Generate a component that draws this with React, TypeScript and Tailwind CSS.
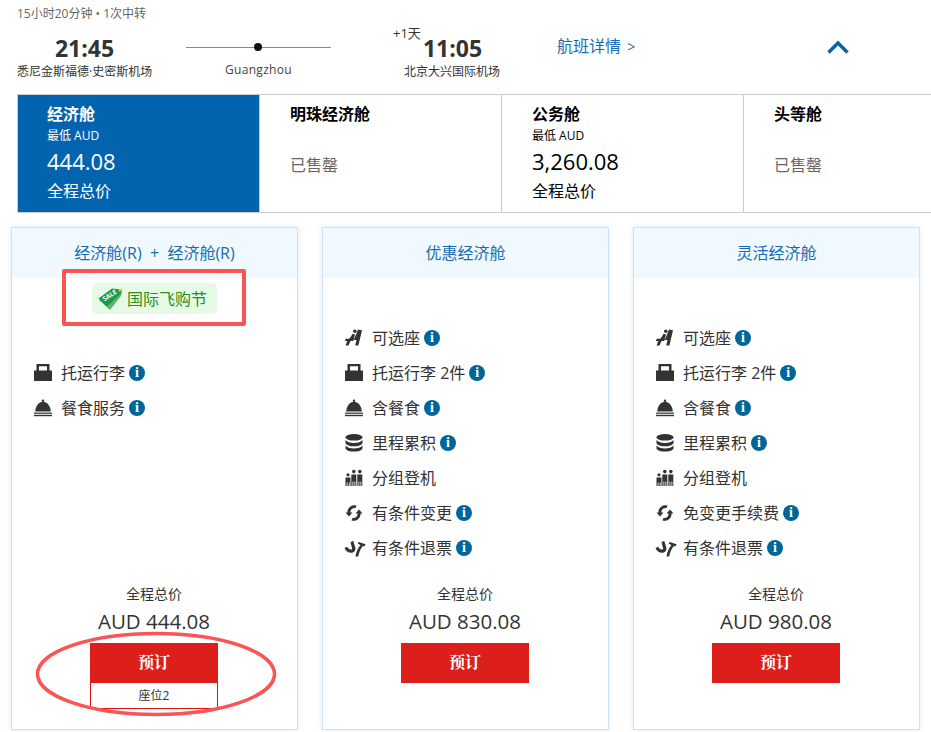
import type { ReactNode } from "react";

const FONT = "font-['Open_Sans','Noto_Sans_CJK_SC',sans-serif]";

type IconName = "seat" | "bag" | "meal" | "miles" | "group" | "change" | "refund";

function FeatureIcon({ name }: { name: IconName }) {
  const cls = "h-[20px] w-[20px] shrink-0 fill-[#333] text-[#333]";
  if (name === "seat") {
    return (
      <svg viewBox="0 0 20 20" className={cls}>
        <path d="M14 1.500l4 .8-3.600 15.200h-3.200l1.300-5.400H9.800z" />
        <circle cx="10.800" cy="3.300" r="1.800" />
        <path d="M8.500 5.800l2.500.6-1.700 6.600H6.500l-2 4.500H1.500l1.800-4.500H.8l1-2.200h3.400L7 8.500z" />
      </svg>
    );
  }
  if (name === "bag") {
    return (
      <svg viewBox="0 0 20 20" className={cls}>
        <path d="M3.500 1h13v6.500H19V18H1V7.500h2.500zM6 3.200v4.300h8V3.200z" fillRule="evenodd" />
      </svg>
    );
  }
  if (name === "meal") {
    return (
      <svg viewBox="0 0 20 20" className={cls}>
        <circle cx="10" cy="2.800" r="1.200" />
        <path d="M2.200 13.400C2.500 8 6 3.800 10 3.800s7.500 4.200 7.800 9.600z" />
        <rect x="1" y="14.600" width="18" height="1.200" />
        <rect x="1" y="16.800" width="18" height="1.400" />
      </svg>
    );
  }
  if (name === "miles") {
    return (
      <svg viewBox="0 0 20 20" className={cls}>
        <ellipse cx="10" cy="4.300" rx="8.500" ry="3.300" />
        <path d="M1.500 7c1.500 2 4.800 2.900 8.500 2.900s7-.9 8.500-2.900v3.200c-1 2.100-4.800 3.100-8.500 3.100s-7.500-1-8.500-3.100z" />
        <path d="M1.500 12.500c1.500 2 4.800 2.900 8.500 2.900s7-.9 8.500-2.900v2.900c-1 2.200-4.800 3.200-8.500 3.200s-7.500-1-8.500-3.200z" />
      </svg>
    );
  }
  if (name === "group") {
    return (
      <svg viewBox="0 0 20 20" className={cls}>
        <circle cx="4" cy="6.800" r="1.600" />
        <circle cx="9.800" cy="3.600" r="1.800" />
        <circle cx="15.800" cy="3.600" r="1.800" />
        <path d="M1.500 9.500h5V18h-.9v-3.500h-.8V18H3.500v-3.500h-.8V18H1.500z" />
        <path d="M7.300 6.500h5V18h-1v-4.500h-.8V18H9.300v-4.500h-.8V18H7.300z" />
        <path d="M13.300 6.500h5V18h-1v-4.500h-.8V18h-1.200v-4.500h-.8V18h-1.200z" />
      </svg>
    );
  }
  if (name === "change") {
    return (
      <svg viewBox="0 0 20 20" className={cls}>
        <path d="M3.500 9.500C3 5 7.500 1 12.500 2.500l-1 2.500C8.800 4.400 6.300 6.500 6.300 9.500h2.200l-3.500 4-3.500-4z" />
        <path d="M16.500 10.500c.5 4.500-4 8.500-9 7l1-2.500c2.700.6 5.200-1.500 5.200-4.500h-2.200l3.500-4 3.500 4z" />
      </svg>
    );
  }
  return (
    <svg viewBox="0 0 22 20" className="h-[20px] w-[22px] shrink-0 fill-[#333]">
      <path d="M.5 10l2.800-1.200c.7 1.800 2 2.800 3.500 2.800.9 0 1.500-.7 1.200-1.700L6.500 4.200l2.700-1.400 2 6.500c.9 3-1 5.500-4 5.500-3.200 0-5.700-1.800-6.700-4.800z" />
      <path d="M11.500 18.500c.6-4.800 2.700-9 5-11.500l-2.800-1.200 1-1.800 7 2.300-1.500 2.200-1.300-.5c-2.100 2.500-4 6.300-4.700 10.500z" />
    </svg>
  );
}

function InfoDot() {
  return (
    <span className="flex h-[16px] w-[16px] shrink-0 items-center justify-center rounded-full bg-[#006699] font-['Liberation_Serif',serif] text-[14px] leading-none font-bold text-white">
      i
    </span>
  );
}

type Feature = { icon: IconName; label: string; info?: boolean };

function FeatureRow({ icon, label, info = true }: Feature) {
  return (
    <li className="flex h-[35px] items-center">
      <span className="w-[28px] shrink-0"><FeatureIcon name={icon} /></span>
      <span className="text-[16px] text-[#333]">{label}</span>
      {info ? <span className="ml-[4px]"><InfoDot /></span> : null}
    </li>
  );
}

function TabCell({ name, children, active }: { name: string; children: ReactNode; active?: boolean }) {
  return (
    <div className={`h-full w-[242px] shrink-0 border-r border-[#ccc] pt-[8px] ${active ? "bg-[#0263ae] pl-[29px] text-white" : "pl-[30px] text-black"}`}>
      <div className="text-[16px] leading-[22px] font-bold">{name}</div>
      {children}
    </div>
  );
}

function TabPrice({ amount }: { amount: string }) {
  return (
    <>
      <div className="mt-[3px] text-[12px] leading-[16px]">最低 AUD</div>
      <div className="mt-[2px] text-[22px] leading-[30px]">{amount}</div>
      <div className="mt-[4px] text-[16px] leading-[22px]">全程总价</div>
    </>
  );
}

function SoldOut() {
  return <div className="mt-[29px] text-[16px] leading-[22px] text-[#666]">已售罄</div>;
}

function FareCard({
  title,
  features,
  price,
  badge,
  seats,
}: {
  title: string;
  features: Feature[];
  price: string;
  badge?: boolean;
  seats?: string;
}) {
  return (
    <div className="flex h-[503px] w-[287px] shrink-0 flex-col border border-[#cfe2f5] bg-white shadow-[0_0_6px_rgba(120,150,190,0.2)]">
      <div className="flex h-[50px] items-center justify-center bg-[#f0f9ff] text-[16px] whitespace-pre text-[#1a6cb0]">{title}</div>
      <div className="flex h-[42px] items-start justify-center pt-[5px]">
        {badge ? (
          <div className="flex h-[31px] w-[125px] items-center rounded-[5px] bg-[#e6fae4] pl-[6px] text-[16px] text-[#2a8f1e]">
            <svg viewBox="0 0 26 24" className="h-[24px] w-[26px] shrink-0">
              <path d="M1 13L16 3l8 1-1 5-11 14z" fill="#5cb46e" />
              <path d="M.5 11.500L14 1.500l10 1-1 4L9 19.500z" fill="#1b9a4a" />
              <circle cx="22" cy="3" r="1.500" fill="#e8d060" />
              <text x="6.500" y="14.500" fontSize="6.500" fontWeight="700" fill="#fff" transform="rotate(-33 6.500 14.500)">SALE</text>
            </svg>
            <span className="ml-[3px]">国际飞购节</span>
          </div>
        ) : null}
      </div>
      <ul className={`pl-[21px] ${badge ? "pt-[35px]" : ""}`}>
        {features.map((f) => (
          <FeatureRow key={f.icon} {...f} />
        ))}
      </ul>
      <div className="mt-auto flex flex-col items-center pr-[1px] pb-[20px]">
        <div className="text-[14px] leading-[18px] text-[#333]">全程总价</div>
        <div className="mt-[4px] text-[20.5px] leading-[28px] text-[#333]">{price}</div>
        <button type="button" className="mt-[8px] h-[40px] w-[128px] bg-[#dd1f1c] font-['Liberation_Serif','Noto_Serif_CJK_SC','Noto_Sans_CJK_SC',serif] text-[16px] font-bold text-white">
          预订
        </button>
        <div className={`flex h-[26px] w-[128px] items-center justify-center text-[12px] text-[#333] ${seats ? "border border-t-0 border-[#e01010]" : ""}`}>
          {seats}
        </div>
      </div>
    </div>
  );
}

const fullFeatures = (change: string): Feature[] => [
  { icon: "seat", label: "可选座" },
  { icon: "bag", label: "托运行李 2件" },
  { icon: "meal", label: "含餐食" },
  { icon: "miles", label: "里程累积" },
  { icon: "group", label: "分组登机", info: false },
  { icon: "change", label: change },
  { icon: "refund", label: "有条件退票" },
];

export default function App() {
  return (
    <div className={`relative h-[732px] w-[931px] overflow-hidden bg-white ${FONT}`}>
      {/* flight summary */}
      <div className="h-[94px] pt-[6px] pl-[17px]">
        <div className="text-[12px] leading-[16px] whitespace-pre text-[#666]">15小时20分钟 • 1次中转</div>
        <div className="flex">
          <div className="mt-[14px] w-[135px] text-center">
            <div className="text-[23px] leading-[24px] font-bold text-[#333]">21:45</div>
            <div className="mt-[4px] text-[12px] leading-[16px] whitespace-nowrap text-[#333]">悉尼金斯福德·史密斯机场</div>
          </div>
          <div className="mt-[25px] ml-[34px] w-[145px]">
            <div className="relative h-px bg-[#888]">
              <span className="absolute top-[-4px] left-[68px] h-[8px] w-[8px] rounded-full bg-[#111]" />
            </div>
            <div className="mt-[14px] text-center text-[12px] leading-[16px] tracking-[0.3px] text-[#444]">Guangzhou</div>
          </div>
          <div className="relative mt-[14px] ml-[73px] w-[96px] text-center">
            <span className="absolute top-[-11px] left-[-11px] text-[13px] leading-[16px] text-[#333]">+1天</span>
            <div className="pl-[1px] text-[23px] leading-[24px] font-bold text-[#333]">11:05</div>
            <div className="mt-[4px] text-[12px] leading-[16px] whitespace-nowrap text-[#333]">北京大兴国际机场</div>
          </div>
          <div className="mt-[13px] ml-[57px] text-[16px] leading-[22px] whitespace-nowrap text-[#1a6cb0]">航班详情 <span className="ml-[2px] text-[14px]">&gt;</span></div>
          <svg viewBox="0 0 22 14" className="mt-[18px] ml-[192px] h-[14px] w-[22px] shrink-0 fill-none stroke-[#0b63a5] stroke-[3.5]">
            <path d="M1.500 12.500L11 3l9.500 9.500" />
          </svg>
        </div>
      </div>

      {/* cabin tabs */}
      <div className="ml-[17px] flex h-[119px] border-y border-l border-[#ccc]">
        <TabCell name="经济舱" active>
          <TabPrice amount="444.08" />
        </TabCell>
        <TabCell name="明珠经济舱">
          <SoldOut />
        </TabCell>
        <TabCell name="公务舱">
          <TabPrice amount="3,260.08" />
        </TabCell>
        <TabCell name="头等舱">
          <SoldOut />
        </TabCell>
      </div>

      {/* fare cards */}
      <div className="mt-[14px] ml-[11px] flex gap-[24px]">
        <FareCard
          title="经济舱(R)  +  经济舱(R)"
          badge
          seats="座位2"
          price="AUD 444.08"
          features={[
            { icon: "bag", label: "托运行李" },
            { icon: "meal", label: "餐食服务" },
          ]}
        />
        <FareCard title="优惠经济舱" price="AUD 830.08" features={fullFeatures("有条件变更")} />
        <FareCard title="灵活经济舱" price="AUD 980.08" features={fullFeatures("免变更手续费")} />
      </div>

      {/* red review annotations */}
      <div className="absolute top-[269px] left-[62px] h-[57px] w-[184px] rounded-[2px] border-[4px] border-[#fb5454]" />
      <svg className="pointer-events-none absolute top-[629px] left-[33px] h-[90px] w-[246px]" viewBox="0 0 246 90">
        <ellipse cx="123" cy="45" rx="118.500" ry="40.500" fill="none" stroke="#fb5454" strokeWidth="3.500" />
      </svg>
    </div>
  );
}
